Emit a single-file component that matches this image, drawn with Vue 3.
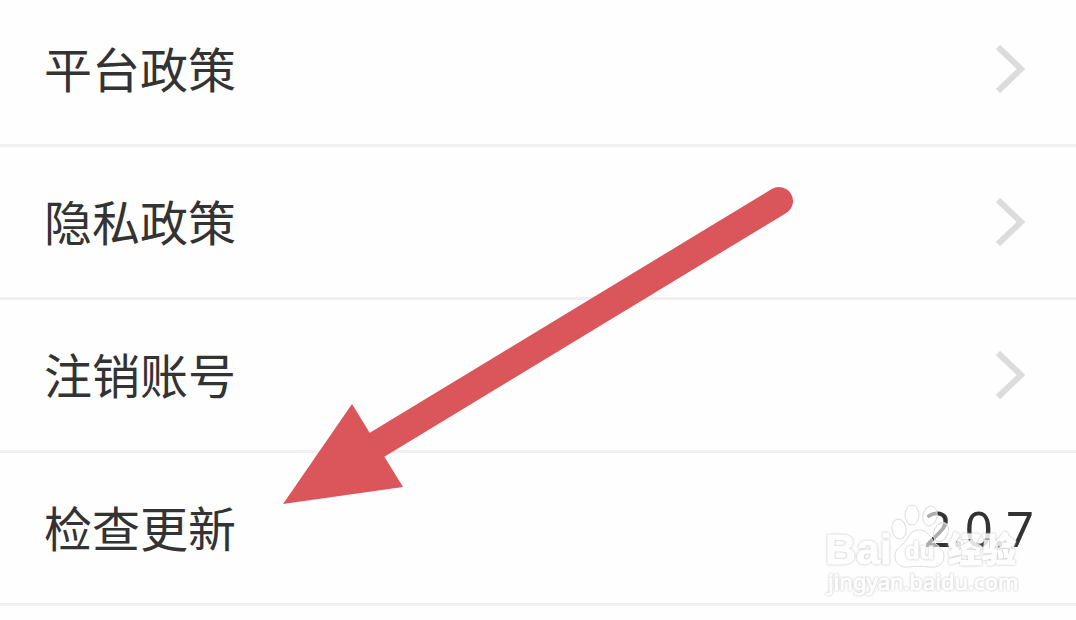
<script setup>
const links = ['平台政策', '隐私政策', '注销账号']
const version = '2.0.7'
</script>

<template>
  <main class="settings">
    <ul class="list">
      <li v-for="label in links" :key="label" class="item">
        <button type="button" class="row">
          <span class="label">{{ label }}</span>
          <svg class="chevron" viewBox="0 0 40 52" aria-hidden="true">
            <path d="M4 4 L27 26 L4 48" />
          </svg>
        </button>
      </li>
      <li class="item">
        <button type="button" class="row">
          <span class="label">检查更新</span>
          <span class="version">{{ version }}</span>
        </button>
      </li>
    </ul>

    <svg class="arrow" viewBox="0 0 520 330" aria-hidden="true">
      <path class="shaft" d="M100 269 L504 24" />
      <path class="head" d="M8 327 L77 227 L128 310 Z" />
    </svg>

    <svg class="watermark" viewBox="0 0 210 110" role="img" aria-label="Baidu 经验">
      <g class="paw">
        <ellipse cx="80" cy="33" rx="7" ry="10" transform="rotate(-10 80 33)" />
        <ellipse cx="93" cy="19" rx="7" ry="10" />
        <ellipse cx="111" cy="20" rx="7" ry="10" transform="rotate(12 111 20)" />
        <ellipse cx="122" cy="36" rx="7" ry="10" transform="rotate(25 122 36)" />
        <path d="M100 34 C108 34 111 40 115 46 C120 51 125 53 125 60 C125 68 119 72 111 71 C104 70 97 70 90 71 C82 72 76 68 76 60 C76 53 81 51 86 46 C90 40 92 34 100 34 Z" />
      </g>
      <g class="letters">
        <text class="brand" x="6" y="68">Bai</text>
        <text class="du" x="86" y="63">du</text>
        <text class="cn" x="129" y="66">经验</text>
        <text class="site" x="9" y="94">jingyan.baidu.com</text>
      </g>
    </svg>
  </main>
</template>

<style>
body {
  margin: 0;
  background: #fefefe;
  overflow: hidden;
}
</style>

<style scoped>
.settings {
  position: relative;
  overflow: hidden;
  height: 100vh;
  background: #fefefe;
  color: #333;
  font-family: "Noto Sans CJK SC", sans-serif;
}

.list {
  list-style: none;
  margin: -6px 0 0;
  padding: 0;
}

.item {
  border-bottom: 3px solid #f0f0f0;
}

.row {
  display: flex;
  align-items: center;
  justify-content: space-between;
  width: 100%;
  height: 150px;
  padding: 0 42px 0 44px;
  border: 0;
  background: none;
  color: inherit;
  font: inherit;
  font-size: 48px;
  line-height: 72px;
  text-align: left;
}

.label {
  padding-bottom: 4px;
}

.chevron {
  width: 40px;
  height: 52px;
  fill: none;
  stroke: #dcdcdc;
  stroke-width: 6;
}

.version {
  font-family: "Noto Sans", sans-serif;
  font-size: 49px;
}

.arrow {
  position: absolute;
  left: 275px;
  top: 177px;
  width: 520px;
  height: 330px;
  pointer-events: none;
}

.shaft {
  fill: none;
  stroke: #db565b;
  stroke-width: 28;
  stroke-linecap: round;
}

.head {
  fill: #db565b;
}

.watermark {
  position: absolute;
  left: 819px;
  top: 496px;
  width: 210px;
  height: 110px;
  pointer-events: none;
}

.paw {
  fill: rgba(255, 255, 255, 0.6);
  stroke: #dedede;
  stroke-width: 1;
}

.letters {
  fill: #fff;
  stroke: #fff;
  stroke-width: 1;
  stroke-linejoin: round;
  filter: drop-shadow(0 0 1px #b0b0b0);
  opacity: 0.85;
}

.brand {
  font: bold 43px "Liberation Sans", sans-serif;
}

.du {
  font: bold 24px "Liberation Sans", sans-serif;
}

.cn {
  font: 900 34px "Noto Sans CJK SC", sans-serif;
}

.site {
  font: 22px "Noto Sans", sans-serif;
}
</style>
